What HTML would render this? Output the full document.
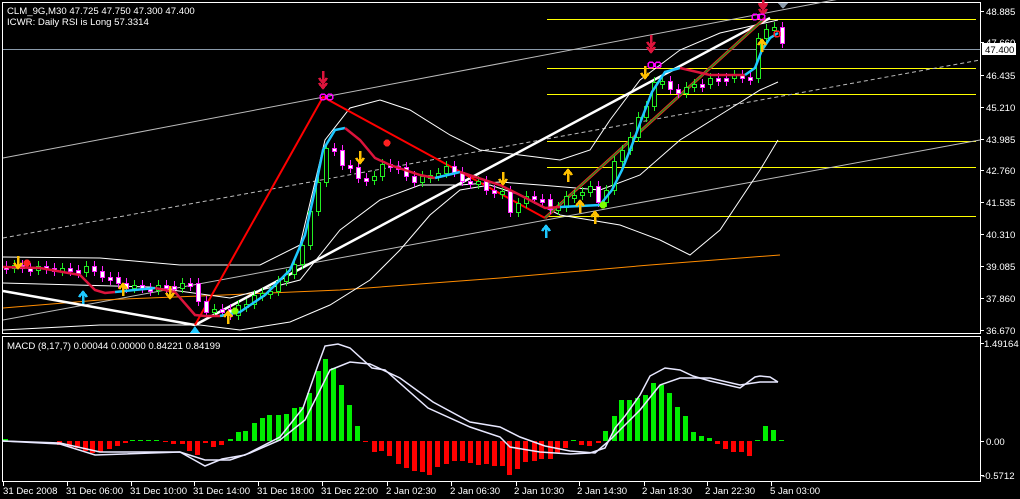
<!DOCTYPE html>
<html><head><meta charset="utf-8"><style>
html,body{margin:0;padding:0;background:#000;width:1020px;height:499px;overflow:hidden}
svg{display:block}
text{font-family:"Liberation Sans",sans-serif;font-size:9.6px;fill:#fff}
</style></head><body>
<svg id="s" width="1020" height="499" viewBox="0 0 1020 499" xmlns="http://www.w3.org/2000/svg" shape-rendering="crispEdges">
<rect width="1020" height="499" fill="#000"/>
<g id="bg">
<rect x="3" y="49" width="977" height="1" fill="#8a9aaa"/>
<rect x="547" y="19" width="429" height="1" fill="#ffff00"/>
<rect x="547" y="68" width="429" height="1" fill="#ffff00"/>
<rect x="547" y="94" width="429" height="1" fill="#ffff00"/>
<rect x="547" y="141" width="429" height="1" fill="#ffff00"/>
<rect x="547" y="167" width="429" height="1" fill="#ffff00"/>
<rect x="547" y="216" width="429" height="1" fill="#ffff00"/>
</g>
<g stroke="#fff" fill="none" stroke-width="1">
<rect x="2.5" y="2.5" width="978" height="331"/>
<rect x="2.5" y="336.5" width="978" height="145"/>
</g>
<g>
<text x="986" y="15">48.885</text>
<text x="986" y="46">47.660</text>
<text x="986" y="79">46.435</text>
<text x="986" y="111">45.210</text>
<text x="986" y="143">43.985</text>
<text x="986" y="174">42.760</text>
<text x="986" y="206">41.535</text>
<text x="986" y="238">40.310</text>
<text x="986" y="270">39.085</text>
<text x="986" y="302">37.860</text>
<text x="986" y="334">36.670</text>
<rect x="982" y="43" width="34" height="12" fill="#fff"/>
<text x="985" y="53" style="fill:#000">47.400</text>
<text x="984" y="347">1.49164</text>
<text x="986" y="445">0.00</text>
<text x="982" y="479">-0.5712</text>
</g>
<g stroke="#fff">
<path d="M981 11.5h3M981 42.5h3M981 75.5h3M981 107.5h3M981 139.5h3M981 170.5h3M981 202.5h3M981 234.5h3M981 266.5h3M981 298.5h3M981 330.5h3M981 343.5h3M981 441.5h3M981 475.5h3"/>
<path d="M3.5 482v4M67.5 482v4M131.5 482v4M194.5 482v4M258.5 482v4M322.5 482v4M387.5 482v4M451.5 482v4M516.5 482v4M579.5 482v4M644.5 482v4M707.5 482v4M771.5 482v4"/>
</g>
<g>
<text x="3" y="494">31 Dec 2008</text>
<text x="66" y="494">31 Dec 06:00</text>
<text x="130" y="494">31 Dec 10:00</text>
<text x="193" y="494">31 Dec 14:00</text>
<text x="257" y="494">31 Dec 18:00</text>
<text x="321" y="494">31 Dec 22:00</text>
<text x="386" y="494">2 Jan 02:30</text>
<text x="450" y="494">2 Jan 06:30</text>
<text x="514" y="494">2 Jan 10:30</text>
<text x="577" y="494">2 Jan 14:30</text>
<text x="642" y="494">2 Jan 18:30</text>
<text x="705" y="494">2 Jan 22:30</text>
<text x="770" y="494">5 Jan 03:00</text>
<text x="7" y="14">CLM_9G,M30  47.725 47.750 47.300 47.400</text>
<text x="7" y="25">ICWR: Daily RSI is Long 57.3314</text>
<text x="7" y="349">MACD  (8,17,7) 0.00044 0.00000 0.84221 0.84199</text>
</g>
<g id="fg"></g>
</svg>
<script>
var NS="http://www.w3.org/2000/svg";
function el(p,t,a){var e=document.createElementNS(NS,t);for(var k in a)e.setAttribute(k,a[k]);p.appendChild(e);return e;}
var bg=document.getElementById('bg'),fg=document.getElementById('fg');
function pl(g,pts,c,w,dash,crisp){var a={points:pts,fill:'none',stroke:c,'stroke-width':w||1,'shape-rendering':crisp?'crispEdges':'auto'};if(dash)a['stroke-dasharray']=dash;el(g,'polyline',a);}
pl(fg,'3,158 850,-3','#bbb',1);
pl(fg,'3,238 980,60','#bbb',1,'4,3');
pl(fg,'3,320 980,140','#bbb',1);
pl(fg,'3,308 100,300 200,296 340,290 500,278 650,265 780,255','#ff8c00',1);
pl(fg,'3,257 100,258 180,265 260,265 300,245 325,140 350,108 380,100 410,110 450,135 480,150 520,155 560,160 590,150 610,120 640,80 680,50 720,33 778,20','#fff',1);
pl(fg,'3,283 150,287 230,298 300,280 340,230 380,200 420,185 460,185 500,182 540,185 600,190 640,175 680,140 720,115 760,90 778,82','#fff',1);
pl(fg,'3,330 100,325 200,325 240,330 290,322 330,305 370,280 400,250 430,215 460,190 490,185 520,195 560,215 620,225 660,240 690,255 720,230 760,170 778,140','#fff',1);
pl(fg,'3,291 195,325','#fff',2.5);
pl(fg,'195,325 770,18','#fff',2.5);
pl(fg,'195,325 323,97 545,218','#ff0000',2);
pl(fg,'545,218 765,18','#ff2020',3);
pl(fg,'545,218 765,18','#1f8f1f',1.5);
var K=[[3,266],[20,268],[40,268],[60,270],[75,270],[83,268],[90,270],[100,276],[115,283],[125,287],[150,288],[165,286],[180,285],[190,282],[200,316],[210,310],[218,305],[226,318],[235,305],[245,301],[255,295],[265,290],[275,283],[285,272],[293,258],[300,245],[306,215],[315,180],[323,150],[331,150],[340,165],[348,170],[355,178],[363,178],[372,178],[380,162],[388,164],[396,170],[405,178],[413,180],[422,177],[430,174],[436,170],[443,168],[452,172],[460,180],[468,185],[476,180],[485,190],[492,196],[500,190],[507,210],[515,205],[522,196],[530,196],[538,200],[546,210],[555,205],[563,198],[571,195],[579,190],[587,188],[593,205],[600,195],[606,180],[612,160],[620,148],[628,133],[634,120],[640,115],[645,100],[651,80],[658,82],[665,88],[672,90],[680,92],[688,85],[697,82],[705,80],[713,78],[722,76],[730,77],[738,77],[747,76],[755,40],[762,30],[770,22],[778,45]];
function iy(x){for(var i=1;i<K.length;i++){if(x<=K[i][0]){var a=K[i-1],b=K[i];return a[1]+(b[1]-a[1])*(x-a[0])/(b[0]-a[0]);}}return K[K.length-1][1];}
var prev=iy(3);
for(var x=3;x<=779;x+=8){var m=(x-3)/8%3;var c=Math.round(iy(x)+(m==0?2:m==1?-2:0));var o=Math.round(prev);prev=c;
 var up=c<o, col=up?'#22ee22':'#ff22ff';
 var t=Math.min(o,c),b=Math.max(o,c);if(b-t<3){b=t+3;}
 el(fg,'line',{x1:x+3.5,x2:x+3.5,y1:t-5,y2:b+5,stroke:col,'stroke-width':1,'shape-rendering':'crispEdges'});
 el(fg,'rect',{x:x+1.5,y:t+.5,width:4,height:b-t,fill:up?'#000':'#fff',stroke:col,'stroke-width':1,'shape-rendering':'crispEdges'});}
pl(fg,'3,267 40,268 80,275 95,290 105,293 115,292','#dc143c',2.5);
pl(fg,'115,292 155,288','#1ec8ff',2.5);
pl(fg,'155,288 175,292 195,315 205,316 220,316','#dc143c',2.5);
pl(fg,'220,316 240,312 265,295 290,270 305,235 315,190 323,150 335,130 345,128','#1ec8ff',2.5);
pl(fg,'345,128 360,140 375,158 390,165 420,175 435,178','#dc143c',2.5);
pl(fg,'435,178 460,172','#1ec8ff',2.5);
pl(fg,'460,172 500,185 520,195 545,208 560,207','#dc143c',2.5);
pl(fg,'560,207 600,205 612,190 622,170 632,145 642,118 652,92 665,72 680,68','#1ec8ff',2.5);
pl(fg,'680,68 710,75 745,75','#dc143c',2.5);
pl(fg,'745,75 755,68 762,50 770,38 778,33','#1ec8ff',2.5);
function arr(x,y,c,dn){var d=dn?1:-1;el(fg,'path',{d:'M'+x+' '+(y-6*d)+'V'+(y+5*d)+'M'+(x-4)+' '+(y+1*d)+'L'+x+' '+(y+6*d)+'L'+(x+4)+' '+(y+1*d),stroke:c,'stroke-width':2.5,fill:'none'});}
[[18,262],[170,292],[360,157],[645,72],[503,178]].forEach(function(p){arr(p[0],p[1],'#ffc000',1);});
[[123,290],[228,318],[568,176],[595,218],[762,46],[580,207]].forEach(function(p){arr(p[0],p[1],'#ffc000',0);});
[[323,82],[651,46],[763,8]].forEach(function(p){arr(p[0],p[1],'#dc143c',1);arr(p[0],p[1]-5,'#dc143c',1);});
[[27,263,'#ff2020'],[387,143,'#ff2020'],[235,311,'#7fff00'],[603,205,'#7fff00']].forEach(function(p){el(fg,'circle',{cx:p[0],cy:p[1],r:3.5,fill:p[2]});});
[[323,97],[330,97],[651,65],[658,65],[755,17],[762,17]].forEach(function(p){el(fg,'circle',{cx:p[0],cy:p[1],r:3,fill:'none',stroke:'#ff00ff','stroke-width':1.5});});
[[83,298],[546,232]].forEach(function(p){arr(p[0],p[1],'#1ec8ff',0);});
el(fg,'path',{d:'M190 333L195 326L200 333Z',fill:'#1ec8ff'});
el(fg,'path',{d:'M758 3H768L763 9Z',fill:'#dc143c'});
el(fg,'path',{d:'M778 3H788L783 9Z',fill:'#8a9aaa'});
el(fg,'circle',{cx:777,cy:34,r:3,fill:'none',stroke:'#ff2020','stroke-width':1.5});
var H=[[3,2],[57,-4],[67,-6],[75,-7],[83,-10],[90,-12],[98,-11],[107,-8],[115,-5],[123,-2],[130,1],[138,1],[146,1],[154,1],[163,-1],[171,-3],[180,-3],[187,-10],[195,-14],[203,-2],[211,-6],[219,-4],[228,2],[236,9],[243,10],[252,18],[260,23],[267,26],[276,26],[284,27],[292,33],[299,34],[307,48],[316,70],[323,82],[331,73],[339,56],[347,36],[355,15],[363,-1],[372,-11],[379,-10],[387,-15],[396,-23],[404,-27],[412,-30],[420,-31],[427,-34],[435,-26],[444,-23],[452,-20],[460,-20],[468,-22],[476,-24],[484,-23],[492,-25],[500,-25],[507,-34],[515,-28],[523,-21],[532,-20],[539,-18],[548,-18],[555,-12],[563,-7],[571,1],[579,-4],[587,-5],[596,-2],[603,10],[612,25],[619,41],[627,41],[635,43],[643,46],[651,58],[659,56],[667,48],[675,34],[683,25],[691,9],[699,5],[707,3],[715,-3],[723,-8],[731,-11],[739,-11],[747,-15],[755,1],[763,15],[771,11],[779,1]];
H.forEach(function(h){var v=h[1];var hh=Math.max(Math.abs(v),1);el(bg,'rect',{x:h[0],y:v>0?441-hh:441,width:5,height:hh,fill:v>=0?'#00ee00':'#ff0000'});});
pl(fg,'3,441 60,444 95,455 180,452 205,466 222,459 245,455 280,437 303,408 318,365 325,346 338,344 350,348 372,368 385,370 428,408 470,427 500,437 510,447 540,452 570,454 590,453 605,448 615,428 625,416 640,395 650,376 665,368 680,370 693,376 710,381 740,388 755,377 760,376 770,377 778,382','#e8e8ff',1.5);
pl(fg,'3,441 60,443 100,452 180,452 205,460 230,460 250,453 280,440 305,420 330,370 350,362 370,364 400,378 433,402 470,422 500,427 520,437 545,446 570,451 595,453 610,440 640,410 660,385 680,378 710,378 740,385 760,382 778,382','#e8e8ff',1.5);
</script>
</body></html>
